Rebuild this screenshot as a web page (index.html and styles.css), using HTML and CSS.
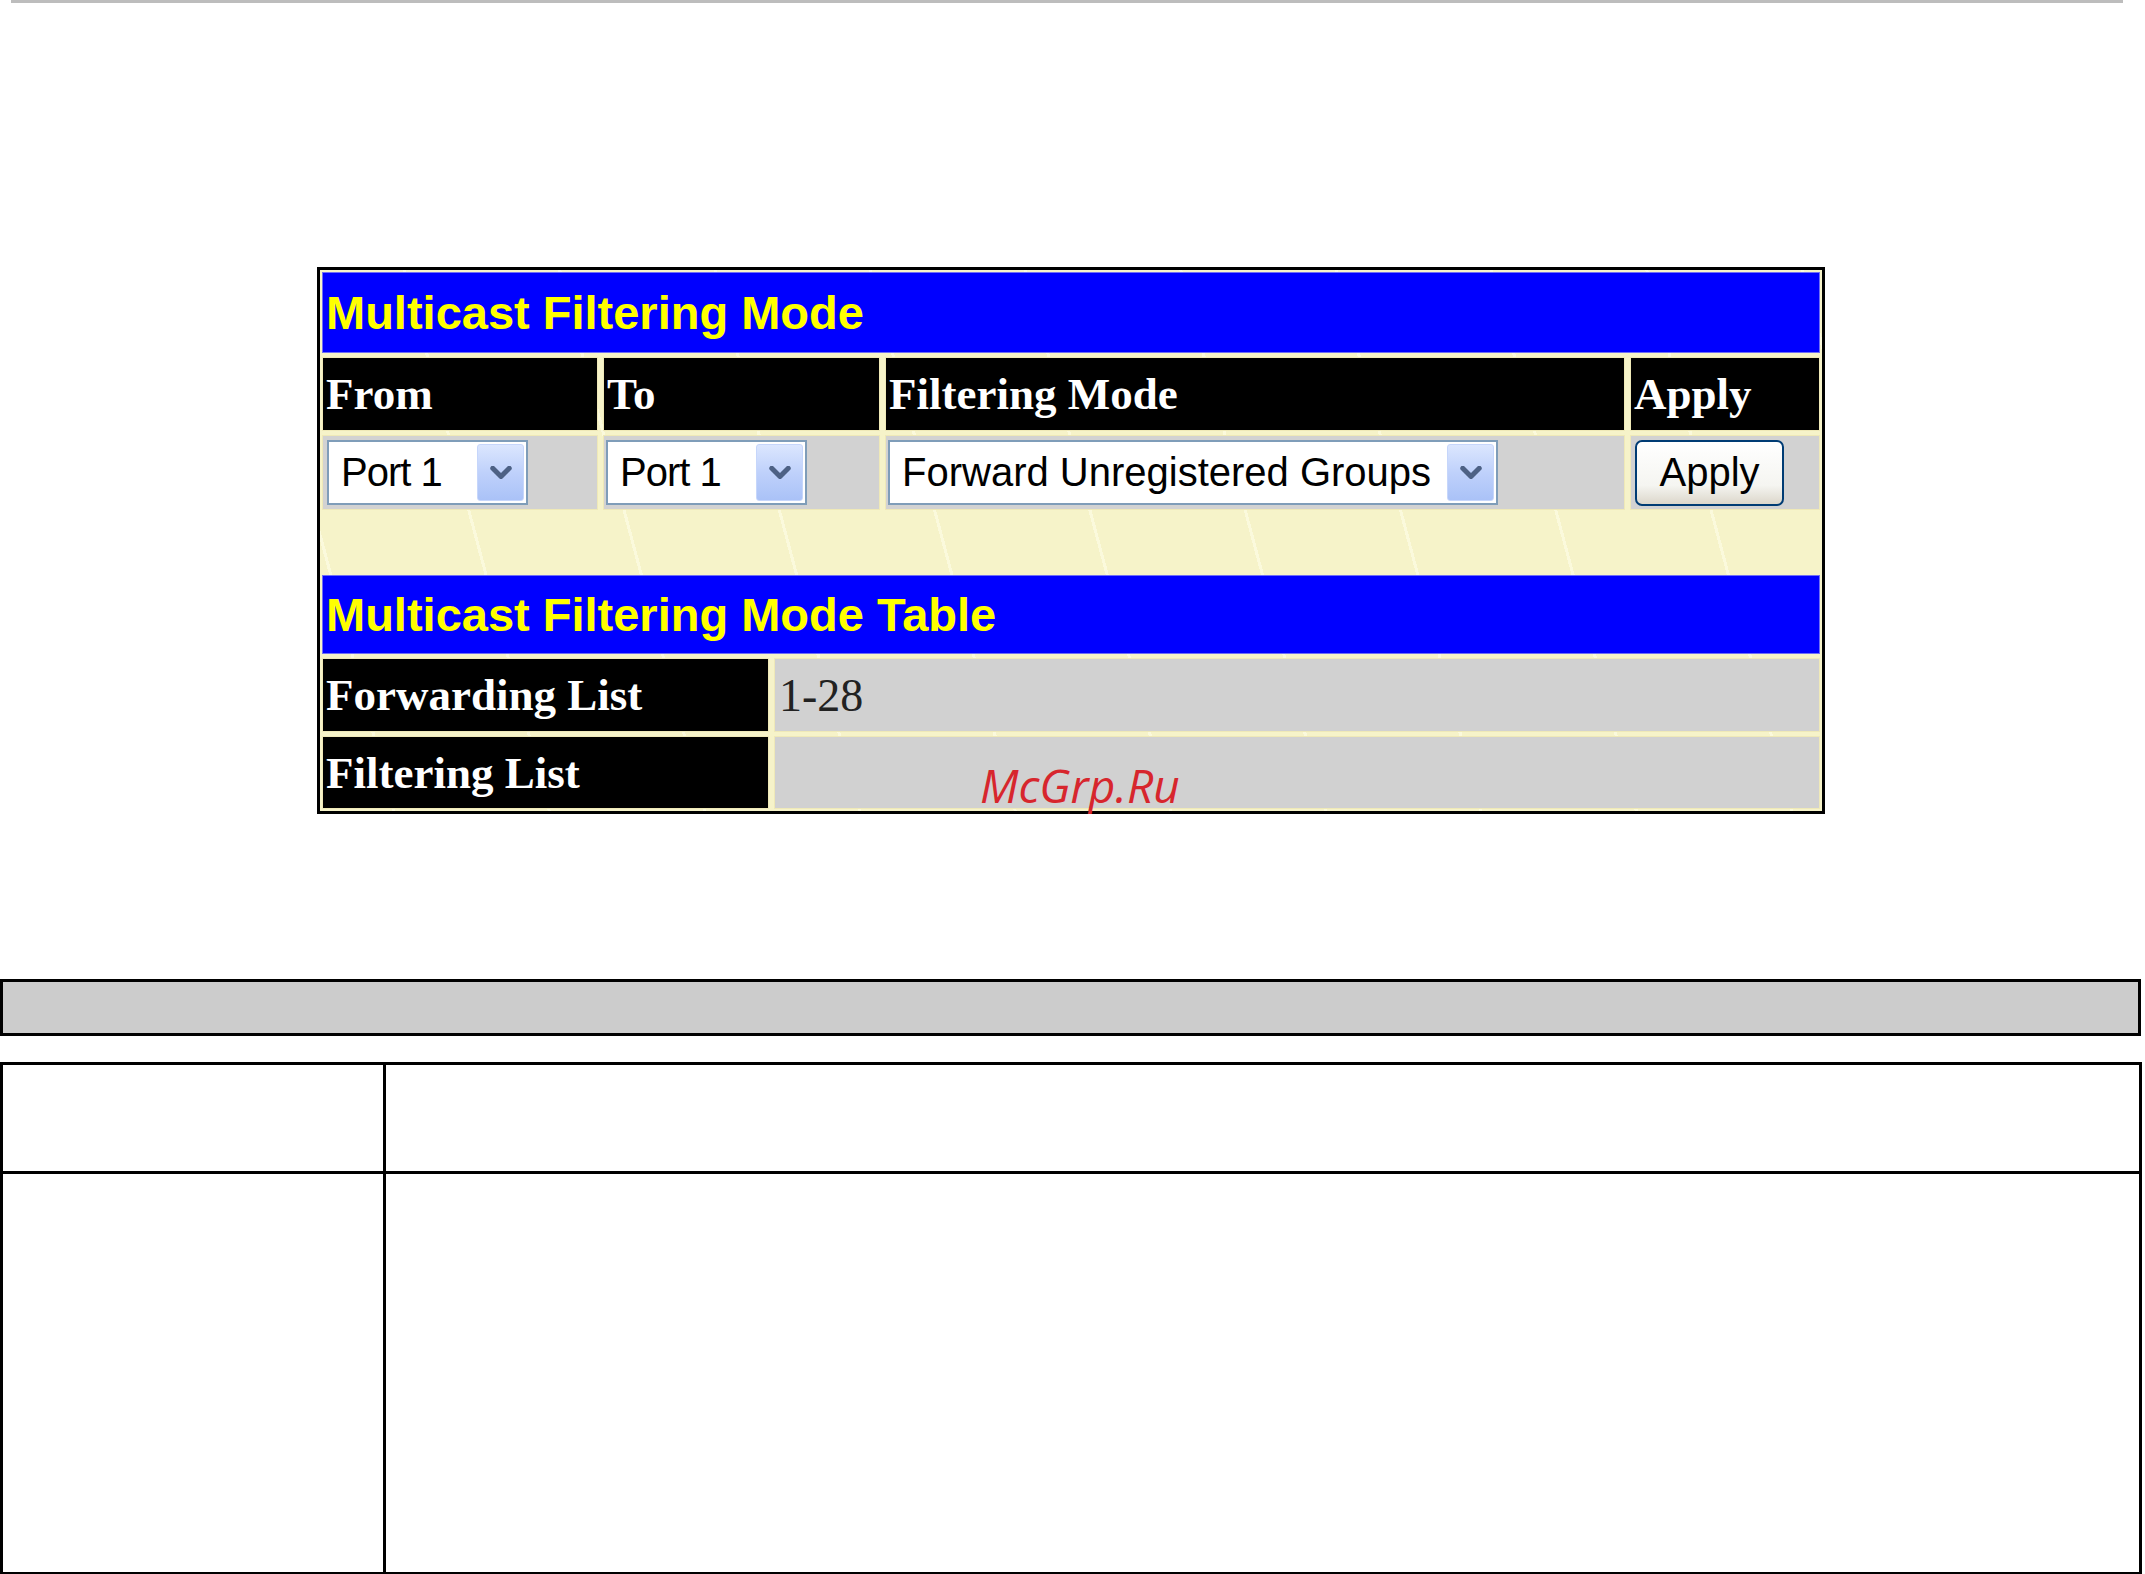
FILE: index.html
```html
<!DOCTYPE html>
<html>
<head>
<meta charset="utf-8">
<title>Multicast Filtering Mode</title>
<link rel="stylesheet" href="styles.css">
</head>
<body>
<div class="page">
  <div class="topline"></div>

  <div class="panel">
    <div class="row title title-1"><span>Multicast Filtering Mode</span></div>
    <div class="row row-head">
      <div class="cell head c-from">From</div>
      <div class="cell head c-to">To</div>
      <div class="cell head c-mode">Filtering Mode</div>
      <div class="cell head c-apply">Apply</div>
    </div>
    <div class="row row-input">
      <div class="cell input c-from pad5">
        <div class="combo combo-port">
          <span class="combo-text">Port 1</span>
          <span class="combo-btn"><svg viewBox="0 0 16 10" class="chev"><path d="M2 1.5 L8 7.5 L14 1.5"/></svg></span>
        </div>
      </div>
      <div class="cell input c-to pad3">
        <div class="combo combo-port">
          <span class="combo-text">Port 1</span>
          <span class="combo-btn"><svg viewBox="0 0 16 10" class="chev"><path d="M2 1.5 L8 7.5 L14 1.5"/></svg></span>
        </div>
      </div>
      <div class="cell input c-mode pad3">
        <div class="combo combo-mode">
          <span class="combo-text">Forward Unregistered Groups</span>
          <span class="combo-btn"><svg viewBox="0 0 16 10" class="chev"><path d="M2 1.5 L8 7.5 L14 1.5"/></svg></span>
        </div>
      </div>
      <div class="cell input c-apply pad5">
        <button class="btn">Apply</button>
      </div>
    </div>
    <div class="spacer"></div>
    <div class="row title title-2"><span>Multicast Filtering Mode Table</span></div>
    <div class="row row-fwd">
      <div class="cell head c-label">Forwarding List</div>
      <div class="cell value">1-28</div>
    </div>
    <div class="row row-filt">
      <div class="cell head c-label">Filtering List</div>
      <div class="cell value"></div>
    </div>
    <div class="watermark">McGrp.Ru</div>
  </div>

  <div class="graybar"></div>

  <table class="desc">
    <tr class="desc-r1"><td class="desc-k"></td><td class="desc-v"></td></tr>
    <tr class="desc-r2"><td class="desc-k"></td><td class="desc-v"></td></tr>
  </table>
</div>
</body>
</html>
```

FILE: styles.css
```css
html, body {
  margin: 0;
  padding: 0;
  background: #ffffff;
}
.page {
  width: 2145px;
  height: 1574px;
  overflow: hidden;
  position: relative;
}
.topline {
  margin-left: 11px;
  width: 2112px;
  height: 3px;
  background: #bdbdbd;
}

/* ---------- panel ---------- */
.panel {
  position: relative;
  margin-top: 264px;
  margin-left: 317px;
  width: 1498px;
  border: 3px solid #000;
  padding: 2px;
  background-color: #f6f3c9;
  background-image: repeating-linear-gradient(75deg, rgba(255,255,236,0) 0 70px, rgba(255,255,236,0.55) 70px 73px, rgba(255,255,236,0) 73px 150px);
  display: flex;
  flex-direction: column;
  gap: 4px;
}
.row {
  display: flex;
  gap: 5px;
}
.title {
  align-items: center;
  padding-left: 4px;
  background: #0000ff;
  font-family: "Liberation Sans", Arial, sans-serif;
  font-weight: bold;
  font-size: 47px;
  color: #ffff00;
  box-shadow: inset 0 0 0 1px #6f6ff5;
}
.title-1 { height: 81px; }
.title-2 { height: 79px; }
.row-head { height: 74px; }
.row-input { height: 75px; }
.row-fwd { height: 74px; }
.row-filt { height: 73px; }
.spacer { height: 57px; }

.cell {
  display: flex;
  align-items: center;
  box-sizing: border-box;
  box-shadow: inset 0 0 0 1px #efe9b8;
}
.head {
  background: #000;
  color: #fff;
  font-family: "Liberation Serif", "Times New Roman", serif;
  font-weight: bold;
  font-size: 45px;
  padding-left: 4px;
}
.input {
  background: #d2d2d2;
}
.pad5 { padding-left: 5px; }
.pad3 { padding-left: 3px; }

.c-from { width: 276px; }
.c-to { width: 277px; }
.c-mode { width: 740px; }
.c-apply { width: 190px; }
.c-label { width: 447px; }
.value {
  flex: 1;
  background: #d1d1d1;
  font-family: "Liberation Serif", "Times New Roman", serif;
  font-size: 46px;
  color: #222;
  padding-left: 5px;
}

/* ---------- combo boxes ---------- */
.combo {
  box-sizing: border-box;
  height: 65px;
  background: #fff;
  border: 2px solid #7f9db9;
  display: flex;
  align-items: center;
  justify-content: space-between;
  padding: 2px 2px 2px 12px;
  font-family: "Liberation Sans", Arial, sans-serif;
  font-size: 40px;
  color: #000;
}
.combo-port { width: 201px; }
.combo-port .combo-text { letter-spacing: -1px; }
.combo-mode { width: 610px; }
.combo-text { white-space: nowrap; }
.combo-btn {
  box-sizing: border-box;
  width: 47px;
  height: 57px;
  border: 1px solid #c6d6fb;
  border-radius: 3px;
  background: linear-gradient(#dbe6fe, #bfd1fb 50%, #aac2f7);
  display: flex;
  align-items: center;
  justify-content: center;
}
.chev {
  width: 22px;
  height: 14px;
}
.chev path {
  fill: none;
  stroke: #4d6185;
  stroke-width: 3.6;
  stroke-linecap: round;
  stroke-linejoin: round;
}

/* ---------- button ---------- */
.btn {
  box-sizing: border-box;
  width: 149px;
  height: 66px;
  margin: 0;
  padding: 0;
  border: 2px solid #003c74;
  border-radius: 7px;
  background: linear-gradient(#ffffff, #f5f5f1 70%, #dcd7cb);
  font-family: "Liberation Sans", Arial, sans-serif;
  font-size: 40px;
  color: #000;
}

/* ---------- watermark ---------- */
.watermark {
  position: absolute;
  left: 660px;
  top: 492px;
  font-family: "Open Sans", "DejaVu Sans", sans-serif;
  font-style: italic;
  font-size: 46px;
  line-height: 46px;
  color: #d7262d;
}

/* ---------- lower block ---------- */
.graybar {
  margin-top: 165px;
  width: 2135px;
  height: 51px;
  border: 3px solid #000;
  background: #cccccc;
}
.desc {
  margin-top: 26px;
  width: 2142px;
  border-collapse: collapse;
  border: 3px solid #000;
}
.desc td {
  border: 3px solid #000;
  padding: 0;
}
.desc-k { width: 380px; }
.desc-r1 td { height: 106px; }
.desc-r2 td { height: 398px; }
```
